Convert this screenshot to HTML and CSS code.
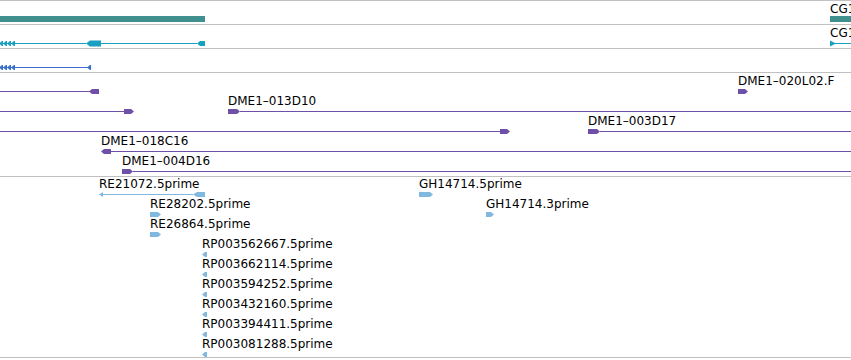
FILE: index.html
```html
<!DOCTYPE html>
<html>
<head>
<meta charset="utf-8">
<link rel="stylesheet" href="styles.css">
</head>
<body>
<div class="browser">
  <section class="track">
    <div class="row row-gene">
      <svg class="glyphs" width="851" height="23">
        <rect class="teal" x="0" y="15" width="205" height="6"/>
        <rect class="teal" x="830" y="15" width="21" height="6"/>
      </svg>
      <span class="lbl lbl-gene" style="left:830px">CG1</span>
    </div>
  </section>

  <section class="track">
    <div class="row row-gene">
      <svg class="glyphs cyan" width="851" height="23">
        <rect x="0" y="18" width="86" height="1"/>
        <polygon points="-1,18.5 2,16 3,16 3,21 2,21"/>
        <polygon points="3,18.5 6,16 7,16 7,21 6,21"/>
        <polygon points="7,18.5 10,16 11,16 11,21 10,21"/>
        <polygon points="11,18.5 14,16 15,16 15,21 14,21"/>
        <polygon points="86,18.5 90,15.5 101,15.5 101,21.5 90,21.5"/>
        <rect x="101" y="18" width="96" height="1"/>
        <polygon points="197,18.5 200,16 205,16 205,21 200,21"/>
        <polygon points="830,15.5 830,21.5 836,18.5"/>
        <rect x="830" y="18" width="21" height="1"/>
      </svg>
      <span class="lbl lbl-gene" style="left:830px">CG1</span>
    </div>
  </section>

  <section class="track">
    <div class="row row-gene">
      <svg class="glyphs blue" width="851" height="23">
        <rect x="0" y="18" width="88" height="1"/>
        <polygon points="-1,18.5 2,16 3,16 3,21 2,21"/>
        <polygon points="3,18.5 6,16 7,16 7,21 6,21"/>
        <polygon points="7,18.5 10,16 11,16 11,21 10,21"/>
        <polygon points="11,18.5 14,16 15,16 15,21 14,21"/>
        <polygon points="87,18.5 90,16 91,16 91,21 90,21"/>
      </svg>
    </div>
  </section>

  <section class="track track-clones">
    <div class="row">
      <svg class="glyphs purple" width="851" height="20">
        <rect x="0" y="17" width="90" height="1"/>
        <polygon points="89,17.5 92,15 99,15 99,20 92,20"/>
        <polygon points="738,15 745,15 748,17.5 745,20 738,20"/>
      </svg>
      <span class="lbl" style="left:738px">DME1–020L02.F</span>
    </div>
    <div class="row">
      <svg class="glyphs purple" width="851" height="20">
        <rect x="0" y="17" width="124" height="1"/>
        <polygon points="124,15 131,15 134,17.5 131,20 124,20"/>
        <polygon points="228,15 237,15 240,17.5 237,20 228,20"/>
        <rect x="240" y="17" width="611" height="1"/>
      </svg>
      <span class="lbl" style="left:228px">DME1–013D10</span>
    </div>
    <div class="row">
      <svg class="glyphs purple" width="851" height="20">
        <rect x="0" y="17" width="500" height="1"/>
        <polygon points="500,15 507,15 510,17.5 507,20 500,20"/>
        <polygon points="588,15 597,15 600,17.5 597,20 588,20"/>
        <rect x="600" y="17" width="251" height="1"/>
      </svg>
      <span class="lbl" style="left:588px">DME1–003D17</span>
    </div>
    <div class="row">
      <svg class="glyphs purple" width="851" height="20">
        <polygon points="111,15 104,15 101,17.5 104,20 111,20"/>
        <rect x="111" y="17" width="740" height="1"/>
      </svg>
      <span class="lbl" style="left:101px">DME1–018C16</span>
    </div>
    <div class="row">
      <svg class="glyphs purple" width="851" height="20">
        <polygon points="122,15 130,15 133,17.5 130,20 122,20"/>
        <rect x="133" y="17" width="718" height="1"/>
      </svg>
      <span class="lbl" style="left:122px">DME1–004D16</span>
    </div>
  </section>

  <section class="track track-ests">
    <div class="row">
      <svg class="glyphs sky" width="851" height="20">
        <polygon points="99,17.5 103,15 103,20"/>
        <rect x="103" y="17" width="90" height="1"/>
        <polygon points="193,17.5 197,15 205,15 205,20 197,20"/>
        <polygon points="419,15 430,15 433,17.5 430,20 419,20"/>
      </svg>
      <span class="lbl" style="left:99px">RE21072.5prime</span>
      <span class="lbl" style="left:419px">GH14714.5prime</span>
    </div>
    <div class="row">
      <svg class="glyphs sky" width="851" height="20">
        <polygon points="150,15 158,15 161,17.5 158,20 150,20"/>
        <polygon points="486,15 491,15 494,17.5 491,20 486,20"/>
      </svg>
      <span class="lbl" style="left:150px">RE28202.5prime</span>
      <span class="lbl" style="left:486px">GH14714.3prime</span>
    </div>
    <div class="row">
      <svg class="glyphs sky" width="851" height="20">
        <polygon points="150,15 158,15 161,17.5 158,20 150,20"/>
      </svg>
      <span class="lbl" style="left:150px">RE26864.5prime</span>
    </div>
    <div class="row">
      <svg class="glyphs sky" width="851" height="20"><polygon points="202,17.5 205,15 207,15 207,20 205,20"/></svg>
      <span class="lbl" style="left:202px">RP003562667.5prime</span>
    </div>
    <div class="row">
      <svg class="glyphs sky" width="851" height="20"><polygon points="202,17.5 205,15 207,15 207,20 205,20"/></svg>
      <span class="lbl" style="left:202px">RP003662114.5prime</span>
    </div>
    <div class="row">
      <svg class="glyphs sky" width="851" height="20"><polygon points="202,17.5 205,15 207,15 207,20 205,20"/></svg>
      <span class="lbl" style="left:202px">RP003594252.5prime</span>
    </div>
    <div class="row">
      <svg class="glyphs sky" width="851" height="20"><polygon points="202,17.5 205,15 207,15 207,20 205,20"/></svg>
      <span class="lbl" style="left:202px">RP003432160.5prime</span>
    </div>
    <div class="row">
      <svg class="glyphs sky" width="851" height="20"><polygon points="202,17.5 205,15 207,15 207,20 205,20"/></svg>
      <span class="lbl" style="left:202px">RP003394411.5prime</span>
    </div>
    <div class="row">
      <svg class="glyphs sky" width="851" height="20"><polygon points="202,17.5 205,15 207,15 207,20 205,20"/></svg>
      <span class="lbl" style="left:202px">RP003081288.5prime</span>
    </div>
  </section>
</div>
</body>
</html>
```

FILE: styles.css
```css
html, body {
  margin: 0;
  padding: 0;
  background: #ffffff;
}

body {
  width: 851px;
  height: 360px;
  overflow: hidden;
  font-family: "DejaVu Sans", "Liberation Sans", sans-serif;
  font-size: 12px;
  line-height: 14px;
  color: #000000;
}

.browser {
  display: flex;
  flex-direction: column;
  width: 851px;
}

.track {
  border-top: 1px solid #c0c0c0;
  display: flex;
  flex-direction: column;
}

.track-clones {
  padding: 1px 0 2px;
}

.track-ests {
  border-bottom: 1px solid #c0c0c0;
}

.row {
  position: relative;
  height: 20px;
  overflow: hidden;
}

.row-gene {
  height: 23px;
}

.glyphs {
  display: block;
}

.lbl {
  position: absolute;
  top: 0;
  white-space: nowrap;
}

.lbl-gene {
  top: 1px;
}

.teal { fill: #409090; }
.cyan { fill: #18a0c0; }
.blue { fill: #3a6fcc; }
.purple { fill: #6e50a8; }
.sky { fill: #80b8e0; }
```
